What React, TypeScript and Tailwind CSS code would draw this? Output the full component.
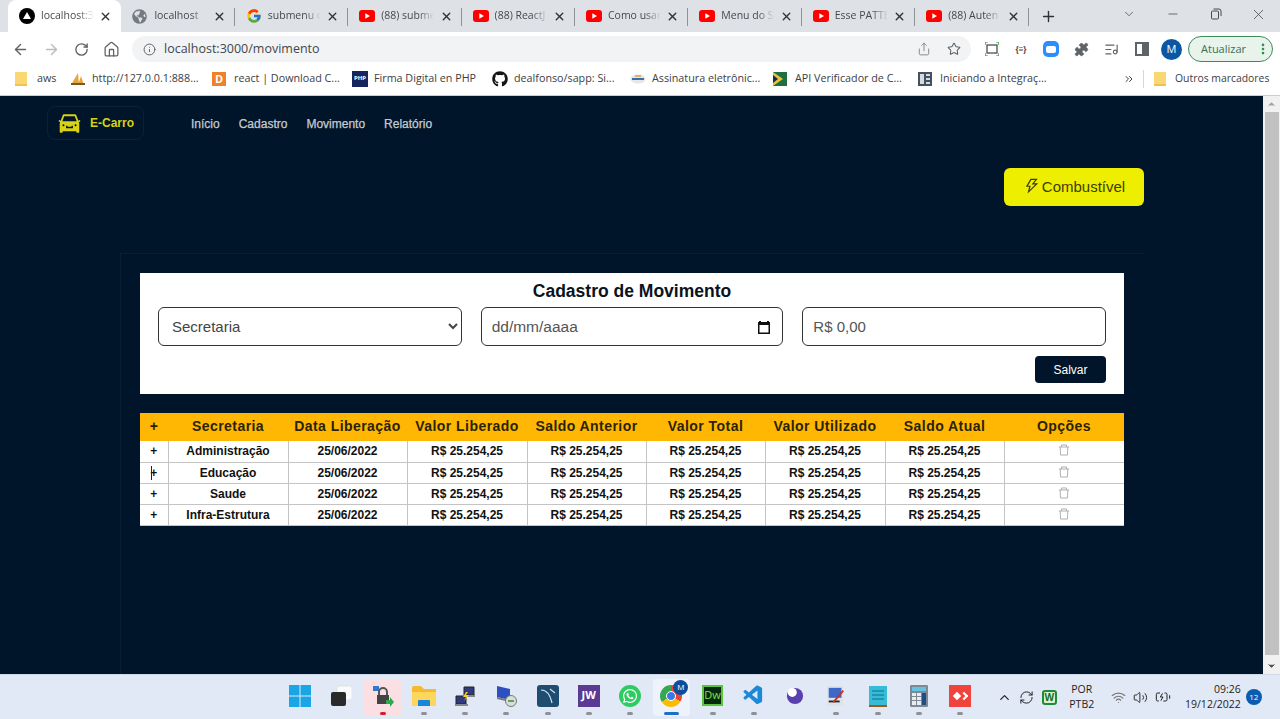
import { ReactNode } from "react";
import {
  ArrowLeft,
  ArrowRight,
  RotateCw,
  Home,
  Info,
  Share,
  Star,
  Puzzle,
  X,
  Plus,
  ChevronDown,
  ChevronUp,
  Minus,
  ChevronsRight,
  EllipsisVertical,
  ListMusic,
  Wifi,
  Volume2,
  BatteryCharging,
  RefreshCw,
} from "lucide-react";
import { AiFillCar, AiOutlineDelete, AiOutlineThunderbolt } from "react-icons/ai";
import { FaGithub, FaGlobeAmericas, FaWhatsapp } from "react-icons/fa";
import { FcGoogle } from "react-icons/fc";
import { VscVscode } from "react-icons/vsc";

const YouTube = () => (
  <svg viewBox="0 0 16 12" className="w-4 h-3">
    <rect width="16" height="12" rx="3" fill="#f00" />
    <path d="M6.3 3.2 11 6l-4.700 2.800z" fill="#fff" />
  </svg>
);

const Folder = () => (
  <svg viewBox="0 0 12 16" className="w-3 h-4">
    <path d="M0 1h12v14H0z" fill="#fbd772" />
    <path d="M0 13h12v2H0z" fill="#f2c14e" />
  </svg>
);

const tabs: { title: string; icon: ReactNode }[] = [
  {
    title: "localhost:3",
    icon: (
      <svg viewBox="0 0 16 16" className="w-4 h-4">
        <circle cx="8" cy="8" r="8" fill="#000" />
        <path d="M8 4l4 7H4z" fill="#fff" />
      </svg>
    ),
  },
  { title: "localhost", icon: <FaGlobeAmericas className="w-[15px] h-[15px] text-[#757a80]" /> },
  { title: "submenu c", icon: <FcGoogle className="w-4 h-4" /> },
  { title: "(88) subme", icon: <YouTube /> },
  { title: "(88) ReactJ", icon: <YouTube /> },
  { title: "Como usar", icon: <YouTube /> },
  { title: "Menu do S", icon: <YouTube /> },
  { title: "Esse PATTE", icon: <YouTube /> },
  { title: "(88) Auten", icon: <YouTube /> },
];

function TabStrip() {
  return (
    <div className="h-8 bg-[#dee1e6] flex items-end pl-2">
      {tabs.map((tab, i) => (
        <div
          key={tab.title}
          className={
            i === 0
              ? "w-[113.400px] h-[32px] bg-white rounded-t-lg flex items-center pl-[11px] pr-[8px] shrink-0"
              : "w-[113.400px] h-[32px] flex items-center pl-[11px] pr-[8px] shrink-0 relative"
          }
        >
          <span className="w-[22px] shrink-0 flex items-center">{tab.icon}</span>
          <span className="w-[53px] shrink-0 whitespace-nowrap text-[10.500px] text-[#45494e] [mask-image:linear-gradient(to_right,black_70%,transparent)]">
            {tab.title}
          </span>
          <X className="w-[13px] h-[13px] text-[#303236] ml-auto mr-[1px] shrink-0" strokeWidth={2.500} />
          {i > 0 && <span className="absolute right-0 top-[8px] h-[18px] w-px bg-[#8f9296]" />}
        </div>
      ))}
      <Plus className="w-[17px] h-[17px] text-[#303236] ml-[11px] mb-[7px] shrink-0" strokeWidth={2} />
      <div className="ml-auto flex items-center h-full pr-[13px] pb-[4px] text-[#46494d]">
        <ChevronDown className="w-[14px] h-[14px] mr-[30px]" strokeWidth={1.300} />
        <Minus className="w-[14px] h-[14px] mr-[30px]" strokeWidth={1.300} />
        <svg viewBox="0 0 12 12" className="w-[12px] h-[12px] mr-[28px]" fill="none" stroke="currentColor">
          <rect x="1.500" y="3" width="7" height="8" rx="1" />
          <path d="M3.500 1h5.500a2 2 0 0 1 2 2v5" />
        </svg>
        <X className="w-[17px] h-[17px]" strokeWidth={1.100} />
      </div>
    </div>
  );
}

function Toolbar() {
  return (
    <div className="h-8 bg-white flex items-center pt-[2px] pl-[12px] pr-[7px] text-[#5f6368]">
      <ArrowLeft className="w-[17px] h-[17px]" strokeWidth={2} />
      <ArrowRight className="w-[17px] h-[17px] ml-[14px] text-[#b9bcc0]" strokeWidth={2} />
      <RotateCw className="w-[15px] h-[15px] ml-[14px]" strokeWidth={2.200} />
      <Home className="w-[17px] h-[17px] ml-[14px]" strokeWidth={1.800} />
      <div className="w-[839px] h-[26px] ml-[12px] rounded-full bg-[#f1f3f4] flex items-center pl-[11px] pr-[10px]">
        <Info className="w-[13px] h-[13px]" strokeWidth={1.800} />
        <span className="ml-[8px] text-[12.500px] text-[#44474b] font-['Open_Sans',sans-serif]">localhost:3000/movimento</span>
        <Share className="w-[14px] h-[14px] ml-auto text-[#7a7e83]" strokeWidth={1.500} />
        <Star className="w-[14px] h-[14px] ml-[16px]" strokeWidth={1.800} />
      </div>
      <svg viewBox="0 0 14 14" className="w-[14px] h-[14px] ml-[14px]" fill="none">
        <rect x="2" y="3" width="10" height="8" stroke="#3c4043" strokeWidth="1.200" />
        <path d="M0 3V0h3M11 0h3v3M0 11v3h3M14 11v3h-3" stroke="#2f8f3e" strokeWidth="1.200" />
      </svg>
      <span className="w-[16px] ml-[14px] text-center text-[8px] font-bold text-[#3c4043]">{"{≡}"}</span>
      <span className="w-[16px] h-[16px] ml-[14px] rounded-[5px] bg-[#2d8cff] flex items-center justify-center">
        <span className="w-[10px] h-[7px] rounded-[2px] bg-white" />
      </span>
      <Puzzle className="w-[15px] h-[15px] ml-[15px] fill-[#5f6368]" strokeWidth={1} />
      <ListMusic className="w-[15px] h-[15px] ml-[15px]" strokeWidth={1.800} />
      <span className="w-[14px] h-[14px] ml-[16px] border-2 border-[#5f6368] flex justify-end">
        <span className="w-[5px] h-full bg-[#5f6368]" />
      </span>
      <span className="w-[21px] h-[21px] ml-[12px] rounded-full bg-[#0b57a4] text-white text-[11px] flex items-center justify-center">M</span>
      <div className="w-[85px] h-[26px] ml-[6px] rounded-full border border-[#3d8b5b] bg-[#e8f3ec] flex items-center pl-[12px] pr-[2px]">
        <span className="text-[11px] text-[#3c6e52] font-['Open_Sans',sans-serif]">Atualizar</span>
        <EllipsisVertical className="w-[14px] h-[14px] ml-auto text-[#2f8f4e]" strokeWidth={2.500} />
      </div>
    </div>
  );
}

const bookmarks: { title: string; w: string; icon: ReactNode }[] = [
  { title: "aws", w: "w-[55px]", icon: <Folder /> },
  {
    title: "http://127.0.0.1:888...",
    w: "w-[142px]",
    icon: (
      <svg viewBox="0 0 16 14" className="w-4 h-[14px]">
        <path d="M1 13 8 1l1 12zM8 13l3-9 3 9z" fill="#e8a33d" />
        <path d="M1 11h14v2H1z" fill="#7a5a20" />
      </svg>
    ),
  },
  {
    title: "react | Download C...",
    w: "w-[140px]",
    icon: (
      <span className="w-[14px] h-[14px] bg-[#f0802a] text-white text-[11px] font-bold flex items-center justify-center leading-none">D</span>
    ),
  },
  {
    title: "Firma Digital en PHP",
    w: "w-[140px]",
    icon: (
      <span className="w-4 h-4 bg-[#16255c] text-white text-[6px] font-bold flex items-center justify-center">PHP</span>
    ),
  },
  { title: "dealfonso/sapp: Si...", w: "w-[138px]", icon: <FaGithub className="w-4 h-4 text-[#161616]" /> },
  {
    title: "Assinatura eletrônic...",
    w: "w-[143px]",
    icon: (
      <svg viewBox="0 0 16 10" className="w-4 h-[10px]">
        <ellipse cx="8" cy="5" rx="7.500" ry="4.500" fill="#e6e6e6" />
        <path d="M2 5h12" stroke="#3b6fa8" strokeWidth="2" />
        <path d="M5 2h6" stroke="#d9a441" strokeWidth="1.500" />
      </svg>
    ),
  },
  {
    title: "API Verificador de C...",
    w: "w-[145px]",
    icon: (
      <svg viewBox="0 0 14 14" className="w-[14px] h-[14px]">
        <path d="M0 0h14v14H0z" fill="#1f6f3f" />
        <path d="M0 0l10 7-10 7z" fill="#e8c23d" />
        <path d="M0 3l5 4-5 4z" fill="#1c2a44" />
      </svg>
    ),
  },
  {
    title: "Iniciando a Integraç...",
    w: "w-[206px]",
    icon: (
      <svg viewBox="0 0 14 14" className="w-[14px] h-[14px]">
        <path d="M0 0h14v14H0z" fill="#44525f" />
        <path d="M2 2h4v10H2zM8 2h4v2H8zM8 6h4v2H8zM8 10h4v2H8z" fill="#d5dae0" />
      </svg>
    ),
  },
];

function BookmarkBar() {
  return (
    <div className="h-[32px] bg-white border-b border-[#c9ccd0] flex items-center pb-[2px] pl-[15px] text-[10.750px] text-[#3c4043] font-['Open_Sans',sans-serif]">
      {bookmarks.map((b) => (
        <div key={b.title} className={`${b.w} flex items-center shrink-0`}>
          <span className="w-[22px] shrink-0 flex items-center">{b.icon}</span>
          <span className="whitespace-nowrap">{b.title}</span>
        </div>
      ))}
      <ChevronsRight className="w-[12px] h-[12px] text-[#3c4043] -ml-[1px]" strokeWidth={2} />
      <span className="w-px h-[18px] bg-[#d5d7da] ml-[8px]" />
      <span className="ml-[10px] mr-[9px] flex items-center">
        <Folder />
      </span>
      <span className="whitespace-nowrap text-[10.400px]">Outros marcadores</span>
    </div>
  );
}

const rows = ["Administração", "Educação", "Saude", "Infra-Estrutura"];
const money = "R$ 25.254,25";
const headers = ["+", "Secretaria", "Data Liberação", "Valor Liberado", "Saldo Anterior", "Valor Total", "Valor Utilizado", "Saldo Atual", "Opções"];

function MovementTable() {
  return (
    <table className="w-[984px] table-fixed border-collapse text-[12px] font-bold text-[#111] bg-white">
      <colgroup>
        <col className="w-[28px]" />
        <col className="w-[120px]" />
        <col className="w-[119px]" />
        <col className="w-[120px]" />
        <col className="w-[119px]" />
        <col className="w-[119px]" />
        <col className="w-[120px]" />
        <col className="w-[119px]" />
        <col className="w-[120px]" />
      </colgroup>
      <thead>
        <tr className="h-[28px] bg-[#ffb703] text-[14px] text-[#2a2300]">
          {headers.map((h) => (
            <th key={h} className="p-0 pb-[2px] font-bold tracking-[0.45px] whitespace-nowrap">
              {h}
            </th>
          ))}
        </tr>
      </thead>
      <tbody>
        {rows.map((name, i) => (
          <tr key={name} className="h-[21px] border-b border-[#c4c4c4]">
            <td className="p-0 text-center relative">
              +{i === 1 && <span className="absolute left-[11px] top-[3px] w-px h-[14px] bg-[#222]" />}
            </td>
            <td className="p-0 text-center border-l border-[#c4c4c4]">{name}</td>
            <td className="p-0 text-center border-l border-[#c4c4c4]">25/06/2022</td>
            {[0, 1, 2, 3, 4].map((c) => (
              <td key={c} className="p-0 text-center border-l border-[#c4c4c4]">
                {money}
              </td>
            ))}
            <td className="p-0 border-l border-[#c4c4c4]">
              <AiOutlineDelete className="w-[14px] h-[14px] mx-auto -mt-[2px] text-[#b0b0b0]" />
            </td>
          </tr>
        ))}
      </tbody>
    </table>
  );
}

function Page() {
  return (
    <div className="h-[578px] flex overflow-hidden bg-[#001529] font-['Liberation_Sans',Arial,sans-serif]">
      <div className="flex-1 min-w-0 flex flex-col">
        <nav className="pt-[10px] pl-[47px] flex items-center">
          <div className="w-[97px] h-[34px] rounded-lg border border-[#0a2238] flex items-center pl-[9px]">
            <AiFillCar className="w-[25px] h-[25px] text-[#d9d216]" />
            <span className="ml-[8px] text-[12px] font-bold text-[#d9d216]">E-Carro</span>
          </div>
          <div className="ml-[47px] pt-[1px] flex gap-[19px] text-[12px] text-[#c6cbd1] [-webkit-text-stroke:0.25px_#c6cbd1]">
            <span>Início</span>
            <span>Cadastro</span>
            <span>Movimento</span>
            <span>Relatório</span>
          </div>
        </nav>
        <div className="flex justify-end pr-[119px] mt-[28px]">
          <button className="w-[140px] h-[38px] rounded-md bg-[#eeee00] text-[#3d3d00] text-[15px] flex items-center justify-center pt-[1px]">
            <AiOutlineThunderbolt className="w-[18px] h-[18px] mr-[1px] -mt-[4px]" />
            Combustível
          </button>
        </div>
        <div className="ml-[120px] mr-[119px] mt-[47px] flex-1 border-l border-t border-dotted border-[#0d2740] pt-[19px] pl-[19px]">
          <section className="w-[984px] h-[121px] bg-white pt-[8px] px-[18px]">
            <h1 className="text-[17.500px] leading-[21px] font-bold text-center text-[#0a1320]">Cadastro de Movimento</h1>
            <div className="mt-[5px] flex gap-[19px]">
              <select className="w-[304px] h-[39px] rounded-md border border-[#333] bg-white pl-[9px] text-[15px] text-[#444] outline-none">
                <option>Secretaria</option>
              </select>
              <div className="w-[303px] h-[39px] rounded-md border border-[#333] flex items-center pl-[10px] pr-[11px] text-[15.500px] text-[#555]">
                dd/mm/aaaa
                <svg viewBox="0 0 14 14" className="w-[14px] h-[14px] ml-auto">
                  <path d="M2 1h2v1h6V1h2v1h1v12H1V2h1zM2.500 5v7.500h9V5z" fill="#111" />
                </svg>
              </div>
              <input
                placeholder="R$ 0,00"
                className="w-[304px] h-[39px] rounded-md border border-[#333] px-[10px] text-[15px] placeholder:text-[#555] outline-none"
              />
            </div>
            <div className="mt-[10px] flex justify-end">
              <button className="w-[71px] h-[27px] rounded-[4px] bg-[#001529] text-white text-[12px]">Salvar</button>
            </div>
          </section>
          <div className="mt-[19px]">
            <MovementTable />
          </div>
        </div>
      </div>
      <div className="w-[17px] shrink-0 bg-[#f1f1f1] flex flex-col items-center">
        <ChevronUp className="w-[11px] h-[16px] fill-[#a3a3a3] text-[#a3a3a3]" />
        <div className="w-[14px] h-[543px] bg-[#c1c1c1]" />
        <ChevronDown className="w-[11px] h-[16px] mt-auto fill-[#505050] text-[#505050]" />
      </div>
    </div>
  );
}

const Pin = ({ color = "bg-[#8d9196]", wide = false }: { color?: string; wide?: boolean }) => (
  <span className={`mt-[3px] h-[3px] rounded-full ${color} ${wide ? "w-[15px]" : "w-[6px]"}`} />
);

const dock: { key: string; icon: ReactNode; pin?: boolean; box?: string; pinColor?: string; wide?: boolean }[] = [
  {
    key: "start",
    icon: (
      <svg viewBox="0 0 22 22" className="w-[22px] h-[22px]">
        <path d="M0 0h10.500v10.500H0zM11.500 0H22v10.500H11.500zM0 11.500h10.500V22H0zM11.500 11.500H22V22H11.500z" fill="#1aa5e6" />
      </svg>
    ),
  },
  {
    key: "view",
    icon: (
      <svg viewBox="0 0 22 22" className="w-[22px] h-[22px]">
        <rect x="7" y="1" width="15" height="14" rx="2" fill="#fafafa" stroke="#d0d4da" strokeWidth="0.500" />
        <rect x="1" y="7" width="15" height="14" rx="2" fill="#2a2a2a" />
      </svg>
    ),
  },
  {
    key: "vpn",
    box: "bg-[#fbdfe2]",
    pin: true,
    pinColor: "bg-[#d02030]",
    icon: (
      <svg viewBox="0 0 22 22" className="w-[22px] h-[22px]">
        <path d="M1 1h6v5H1z" fill="#2f78d8" />
        <path d="M7 10V7a4 4 0 0 1 8 0v3" fill="none" stroke="#555" strokeWidth="2" />
        <path d="M5 10h12v9H5z" fill="#444" />
        <path d="M14 15h4v-3l4 5-4 5v-3h-4z" fill="#2fa84f" />
      </svg>
    ),
  },
  {
    key: "files",
    pin: true,
    icon: (
      <svg viewBox="0 0 24 20" className="w-[24px] h-[20px]">
        <path d="M0 2a2 2 0 0 1 2-2h7l3 3h12v17H0z" fill="#f7b92e" />
        <path d="M0 6h24v14H0z" fill="#fcd75c" />
        <path d="M7 14h10a1 1 0 0 1 1 1v5H6v-5a1 1 0 0 1 1-1z" fill="#1985d8" />
      </svg>
    ),
  },
  {
    key: "net",
    pin: true,
    icon: (
      <svg viewBox="0 0 22 22" className="w-[22px] h-[22px]">
        <path d="M10 2h10v8H10z" fill="#33397e" stroke="#222" />
        <path d="M2 11h10v8H2z" fill="#33397e" stroke="#222" />
        <path d="M1 19h13v2H1zM11 10h10v2H11z" fill="#888" />
        <path d="m12 7-3 5h3l-2 4 5-6h-3l2-3z" fill="#f2d21b" />
      </svg>
    ),
  },
  {
    key: "remote",
    pin: true,
    icon: (
      <svg viewBox="0 0 22 22" className="w-[22px] h-[22px]">
        <path d="M2 1l13 3v11L2 12z" fill="#2d4fbf" />
        <path d="M2 12l13 3v2L2 14z" fill="#777" />
        <circle cx="16" cy="16" r="5.500" fill="#d8dfd8" stroke="#777" />
        <path d="M13 16h6" stroke="#3b8a3b" strokeWidth="1.500" />
      </svg>
    ),
  },
  {
    key: "mysql",
    pin: true,
    icon: (
      <svg viewBox="0 0 22 22" className="w-[22px] h-[22px]">
        <rect width="22" height="22" rx="3" fill="#1f4d72" />
        <path d="M4 5c6 0 9 4 11 13M13 4l5 4" fill="none" stroke="#cfe0ec" strokeWidth="1.200" />
      </svg>
    ),
  },
  {
    key: "jw",
    pin: true,
    icon: (
      <span className="w-[22px] h-[22px] bg-[#5b3a93] text-white text-[11px] font-bold flex items-center justify-center">JW</span>
    ),
  },
  {
    key: "whatsapp",
    pin: true,
    icon: (
      <span className="w-[22px] h-[22px] rounded-full bg-[#2ecc60] text-white flex items-center justify-center">
        <FaWhatsapp className="w-[16px] h-[16px]" />
      </span>
    ),
  },
  {
    key: "chrome",
    box: "bg-[#eef3fb]",
    pin: true,
    pinColor: "bg-[#1f6fc4]",
    wide: true,
    icon: (
      <span className="relative w-[24px] h-[24px] flex items-center justify-center">
        <span className="w-[22px] h-[22px] rounded-full bg-[conic-gradient(#ea4335_0_33%,#fbbc05_33%_66%,#34a853_66%_100%)] flex items-center justify-center">
          <span className="w-[10px] h-[10px] rounded-full bg-[#3b78e7] border border-white" />
        </span>
        <span className="absolute -top-[4px] -right-[5px] w-[15px] h-[15px] rounded-full bg-[#0b4f9c] text-white text-[8px] flex items-center justify-center">M</span>
      </span>
    ),
  },
  {
    key: "dw",
    pin: true,
    icon: (
      <span className="w-[21px] h-[21px] bg-[#062b0c] border-2 border-[#5cc43a] text-[#7fe052] text-[11px] flex items-center justify-center">Dw</span>
    ),
  },
  { key: "vscode", pin: true, icon: <VscVscode className="w-[23px] h-[23px] text-[#1a8ad8]" /> },
  {
    key: "eclipse",
    icon: (
      <svg viewBox="0 0 20 20" className="w-[18px] h-[18px]">
        <circle cx="10" cy="10" r="9" fill="#5a3fb0" />
        <circle cx="7" cy="6" r="5" fill="#fff" />
      </svg>
    ),
  },
  {
    key: "paint",
    pin: true,
    icon: (
      <svg viewBox="0 0 22 22" className="w-[20px] h-[22px]">
        <path d="M1 0h18v22H1z" fill="#dfe3e8" />
        <path d="M3 2h14v11H3z" fill="#3c68c8" />
        <path d="M3 16h12v2H3z" fill="#222" />
        <path d="M19 5 8 18" stroke="#c8302a" strokeWidth="2" />
      </svg>
    ),
  },
  {
    key: "notes",
    pin: true,
    icon: (
      <svg viewBox="0 0 18 22" className="w-[18px] h-[22px]">
        <path d="M0 1h18v21H0z" fill="#37bcd8" />
        <path d="M3 6h12M3 10h12M3 14h12" stroke="#0c6d88" />
        <path d="M0 20h18v2H0z" fill="#9a5a1c" />
      </svg>
    ),
  },
  {
    key: "calc",
    pin: true,
    icon: (
      <svg viewBox="0 0 18 22" className="w-[18px] h-[22px]">
        <rect width="18" height="22" rx="1" fill="#7d8a92" />
        <path d="M2 2h14v4H2z" fill="#64c3e0" />
        <path d="M2 8h4v3H2zM7 8h4v3H7zM2 12h4v3H2zM7 12h4v3H7zM2 16h4v4H2zM7 16h4v4H7z" fill="#e8ecef" />
        <path d="M12 8h4v12h-4z" fill="#1f4e86" />
      </svg>
    ),
  },
  {
    key: "anydesk",
    pin: true,
    icon: (
      <span className="w-[22px] h-[22px] bg-[#ef443b] flex items-center justify-center gap-[1px]">
        <span className="w-[6px] h-[6px] bg-white rotate-45" />
        <span className="w-[6px] h-[6px] border-t-2 border-r-2 border-white rotate-45" />
      </span>
    ),
  },
];

function Taskbar() {
  return (
    <div className="h-[45px] border-t border-[#cfd8e6] bg-[#e2e9f6] flex items-center pl-[281.500px] font-['Open_Sans',sans-serif] text-[#222]">
      {dock.map((d) => (
        <div
          key={d.key}
          className={`w-[37px] h-[37px] mr-[4.250px] rounded-[4px] flex flex-col items-center justify-end pb-[1px] shrink-0 ${d.box ?? ""}`}
        >
          <span className="h-[26px] flex items-center">{d.icon}</span>
          {d.pin ? <Pin color={d.pinColor} wide={d.wide} /> : <span className="h-[6px]" />}
        </div>
      ))}
      <ChevronUp className="w-[15px] h-[15px] ml-[14px]" strokeWidth={2} />
      <RefreshCw className="w-[15px] h-[15px] ml-[7px]" strokeWidth={1.600} />
      <span className="w-[15px] h-[15px] ml-[8px] rounded-[3px] border-2 border-[#1f8a3a] bg-[#d7f2c8] text-[#14702b] text-[10px] font-bold flex items-center justify-center leading-none">W</span>
      <div className="w-[40px] ml-[5px] text-[10.500px] leading-[15px] text-center">
        <div>POR</div>
        <div>PTB2</div>
      </div>
      <Wifi className="w-[15px] h-[15px] ml-[9px] text-[#777]" strokeWidth={1.800} />
      <Volume2 className="w-[15px] h-[15px] ml-[7px]" strokeWidth={1.500} />
      <BatteryCharging className="w-[16px] h-[16px] ml-[7px]" strokeWidth={1.500} />
      <div className="w-[62px] ml-[8px] text-[10.500px] leading-[15px] text-right whitespace-nowrap">
        <div>09:26</div>
        <div>19/12/2022</div>
      </div>
      <span className="w-[16px] h-[16px] ml-[5px] rounded-full bg-[#0a5cb0] text-white text-[8px] flex items-center justify-center">12</span>
    </div>
  );
}

export default function App() {
  return (
    <div className="w-[1280px] h-[719px] overflow-hidden flex flex-col font-['Open_Sans',sans-serif]">
      <TabStrip />
      <Toolbar />
      <BookmarkBar />
      <Page />
      <Taskbar />
    </div>
  );
}
